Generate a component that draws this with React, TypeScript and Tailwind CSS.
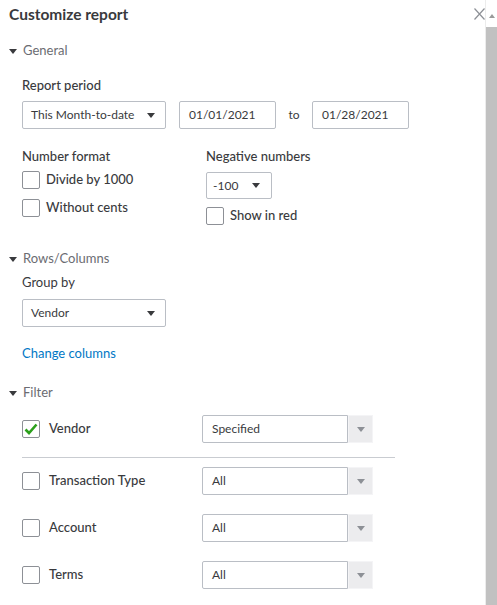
import { ReactNode } from 'react'

const font = { fontFamily: 'Lato, "Open Sans", sans-serif' }

function Caret({ className = 'fill-[#393a3d]' }: { className?: string }) {
  return (
    <svg width="8" height="5" viewBox="0 0 8 5" className={className}>
      <path d="M0 0h8L4 5z" />
    </svg>
  )
}

function SectionHeader({ label, className = '' }: { label: string; className?: string }) {
  return (
    <div className={`flex items-center gap-[6px] pl-[9px] h-[18px] text-[13px] text-[#6b6c72] ${className}`}>
      <Caret className="fill-[#393a3d]" />
      <span>{label}</span>
    </div>
  )
}

function Checkbox({ checked = false }: { checked?: boolean }) {
  return (
    <span className="flex items-center justify-center w-[18px] h-[18px] shrink-0 border border-[#8d9096] rounded-[2px] bg-white">
      {checked && (
        <svg width="14" height="12" viewBox="0 0 14 12">
          <path d="M1.5 6.5l3.5 3.5 7.5-8.5" fill="none" stroke="#2ca01c" strokeWidth="2.6" />
        </svg>
      )}
    </span>
  )
}

function CheckRow({ label, checked, className = '' }: { label: string; checked?: boolean; className?: string }) {
  return (
    <div className={`flex items-center gap-[6px] h-[18px] text-[13px] font-medium text-[#393a3d] ${className}`}>
      <Checkbox checked={checked} />
      <span>{label}</span>
    </div>
  )
}

function Select({ value, width, className = '' }: { value: string; width: string; className?: string }) {
  return (
    <div className={`flex items-center justify-between h-[28px] pl-[8px] pr-[10px] border border-[#babec5] rounded-[2px] text-[12px] text-[#393a3d] ${width} ${className}`}>
      <span>{value}</span>
      <Caret />
    </div>
  )
}

function FilterSelect({ value }: { value: string }) {
  return (
    <div className="flex h-[28px] w-[171px] text-[12px] text-[#393a3d]">
      <div className="flex items-center flex-1 pl-[9px] border border-[#babec5] rounded-l-[2px]">{value}</div>
      <div className="flex items-center justify-center w-[25px] bg-[#ececee] border border-[#f4f4f6]">
        <Caret className="fill-[#8d9096]" />
      </div>
    </div>
  )
}

function FilterRow({ label, value, checked, className = '' }: { label: string; value: string; checked?: boolean; className?: string }) {
  return (
    <div className={`flex items-center h-[28px] pl-[22px] ${className}`}>
      <div className="flex items-center gap-[9px] w-[180px] text-[13px] font-medium text-[#393a3d]">
        <Checkbox checked={checked} />
        <span>{label}</span>
      </div>
      <FilterSelect value={value} />
    </div>
  )
}

function Label({ children, className = '' }: { children: ReactNode; className?: string }) {
  return <div className={`h-[18px] leading-[18px] text-[13px] font-medium text-[#393a3d] ${className}`}>{children}</div>
}

export default function App() {
  return (
    <div className="relative flex w-[497px] h-[605px] bg-white overflow-hidden" style={font}>
      <div className="flex-1">
        {/* Title */}
        <div className="flex items-center h-[30px] pl-[9px] text-[15.5px] font-bold text-[#393a3d]">Customize report</div>

        {/* General */}
        <SectionHeader label="General" className="mt-[12px]" />
        <div className="pl-[22px]">
          <Label className="mt-[16px]">Report period</Label>
          <div className="flex items-center mt-[7px]">
            <Select value="This Month-to-date" width="w-[144px]" />
            <div className="flex items-center h-[28px] w-[97px] ml-[13px] pl-[9px] border border-[#babec5] rounded-[2px] text-[12px] text-[#393a3d]">01/01/2021</div>
            <span className="w-[36px] text-center text-[12px] text-[#393a3d]">to</span>
            <div className="flex items-center h-[28px] w-[97px] pl-[9px] border border-[#babec5] rounded-[2px] text-[12px] text-[#393a3d]">01/28/2021</div>
          </div>

          <div className="flex mt-[18px]">
            <div className="w-[184px]">
              <Label>Number format</Label>
              <CheckRow label="Divide by 1000" className="mt-[6px]" />
              <CheckRow label="Without cents" className="mt-[10px]" />
            </div>
            <div>
              <Label>Negative numbers</Label>
              <Select value="-100" width="w-[66px]" className="mt-[7px] !h-[27px] !pl-[6px] !pr-[11px]" />
              <CheckRow label="Show in red" className="mt-[8px]" />
            </div>
          </div>
        </div>

        {/* Rows/Columns */}
        <SectionHeader label="Rows/Columns" className="mt-[25px]" />
        <div className="pl-[22px]">
          <div className="h-[18px] leading-[18px] mt-[5px] text-[13px] text-[#393a3d]">Group by</div>
          <Select value="Vendor" width="w-[144px]" className="mt-[8px]" />
          <div className="h-[18px] leading-[18px] mt-[17px] text-[13px] text-[#0077c5]">Change columns</div>
        </div>

        {/* Filter */}
        <SectionHeader label="Filter" className="mt-[22px]" />
        <FilterRow label="Vendor" value="Specified" checked className="mt-[13px]" />
        <div className="ml-[22px] w-[373px] mt-[14px] border-t border-[#c9ccd1]" />
        <FilterRow label="Transaction Type" value="All" className="mt-[9px]" />
        <FilterRow label="Account" value="All" className="mt-[19px]" />
        <FilterRow label="Terms" value="All" className="mt-[19px]" />
      </div>

      {/* Close */}
      <svg width="11" height="12" viewBox="0 0 11 12" className="absolute top-[8px] right-[12px]">
        <path d="M0.5 0.5l10 11M10.5 0.5l-10 11" stroke="#8d9096" strokeWidth="1.2" fill="none" />
      </svg>

      {/* Scrollbar */}
      <div className="flex flex-col w-[12px] border-l border-[#ececec]">
        <div className="flex items-center justify-center h-[27px] pt-[4px]">
          <svg width="6" height="4" viewBox="0 0 6 4" className="fill-[#9a9a9a]">
            <path d="M0 4h6L3 0z" />
          </svg>
        </div>
        <div className="flex-1 bg-[#c1c1c1]" />
      </div>
    </div>
  )
}
